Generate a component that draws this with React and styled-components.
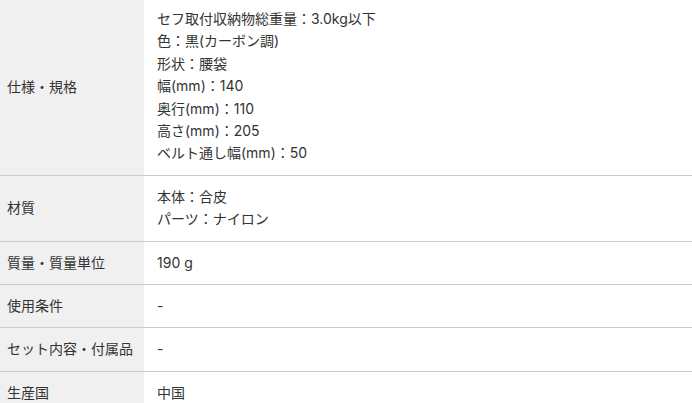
import React from 'react'
import styled, { createGlobalStyle } from 'styled-components'

const GlobalStyle = createGlobalStyle`
  html, body {
    margin: 0;
    padding: 0;
    background: #fff;
  }
  body {
    font-family: Inter, "Noto Sans CJK JP", sans-serif;
    color: #333;
  }
`

const SPECS = [
  {
    label: '仕様・規格',
    lines: [
      'セフ取付収納物総重量：3.0kg以下',
      '色：黒(カーボン調)',
      '形状：腰袋',
      '幅(mm)：140',
      '奥行(mm)：110',
      '高さ(mm)：205',
      'ベルト通し幅(mm)：50',
    ],
  },
  { label: '材質', lines: ['本体：合皮', 'パーツ：ナイロン'] },
  { label: '質量・質量単位', lines: ['190 g'] },
  { label: '使用条件', lines: ['-'] },
  { label: 'セット内容・付属品', lines: ['-'] },
  { label: '生産国', lines: ['中国'] },
]

const Table = styled.div`
  display: flex;
  flex-direction: column;
  width: 100%;
  font-size: 14px;
  line-height: 22.4px;
`

const Row = styled.div`
  display: grid;
  grid-template-columns: 144px 1fr;
  border-top: ${props => (props.first ? 'none' : '1px solid #cccccc')};
`

const Label = styled.div`
  display: flex;
  align-items: center;
  padding: 10px 7px;
  background-color: #f0f0f0;
`

const Value = styled.div`
  display: flex;
  flex-direction: column;
  padding: ${props => (props.first ? '8px' : '10px')} 13px 10px;
`

export default function App() {
  return (
    <>
      <GlobalStyle />
      <Table>
        {SPECS.map((spec, i) => (
          <Row key={spec.label} first={i === 0}>
            <Label>{spec.label}</Label>
            <Value first={i === 0}>
              {spec.lines.map(line => (
                <span key={line}>{line}</span>
              ))}
            </Value>
          </Row>
        ))}
      </Table>
    </>
  )
}
